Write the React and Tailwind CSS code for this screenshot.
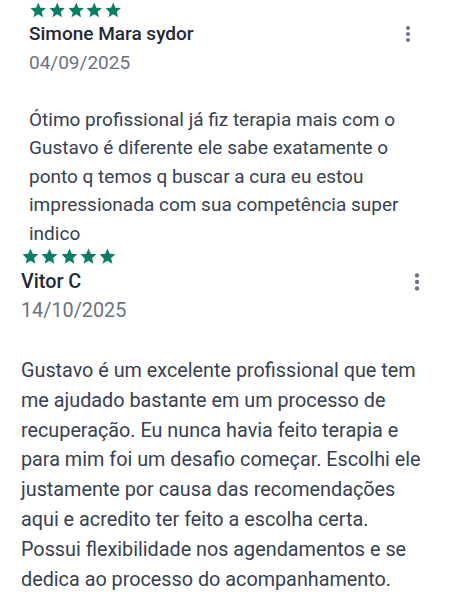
import React from 'react';

const STAR_PATH = 'M12 17.27L18.18 21l-1.64-7.03L22 9.24l-7.19-.61L12 2 9.19 8.63 2 9.24l5.46 5.73L5.82 21z';

const REVIEWS = [
    {
        name: 'Simone Mara sydor',
        date: '04/09/2025',
        text: 'Ótimo profissional já fiz terapia mais com o Gustavo é diferente ele sabe exatamente o ponto q temos q buscar a cura eu estou impressionada com sua competência super indico',
        small: true,
    },
    {
        name: 'Vitor C',
        date: '14/10/2025',
        text: 'Gustavo é um excelente profissional que tem me ajudado bastante em um processo de recuperação. Eu nunca havia feito terapia e para mim foi um desafio começar. Escolhi ele justamente por causa das recomendações aqui e acredito ter feito a escolha certa. Possui flexibilidade nos agendamentos e se dedica ao processo do acompanhamento.',
        small: false,
    },
];

const Stars = ({ small }) => (
    <div className={`flex ${small ? 'h-[14px] gap-[0.3px]' : 'h-[15px] gap-[0.3px]'} items-center`}>
        {[0, 1, 2, 3, 4].map((i) => (
            <svg key={i} viewBox="0 0 24 24" className={small ? 'w-[18.5px] h-[18.5px] shrink-0' : 'w-[19px] h-[19px] shrink-0'} fill="#0a7e63">
                <path d={STAR_PATH} />
            </svg>
        ))}
    </div>
);

const Kebab = ({ small }) => (
    <svg viewBox="0 0 24 24" className={small ? 'w-[24px] h-[24px]' : 'w-[26px] h-[26px]'} fill="#6b7280">
        <circle cx="12" cy="6" r="2" />
        <circle cx="12" cy="12" r="2" />
        <circle cx="12" cy="18" r="2" />
    </svg>
);

const Review = ({ name, date, text, small }) => (
    <div className={small ? 'pl-[29px] pr-[30px] pt-[3px]' : 'pl-[21px] pr-[20px] pt-px'}>
        <Stars small={small} />
        <div className={`flex items-center justify-between ${small ? 'mt-[4px]' : 'mt-[5px]'}`}>
            <p className={`font-medium text-[#1f2937] ${small ? 'text-[19px] leading-[25px]' : 'text-[19.8px] leading-[26px]'}`}>{name}</p>
            <Kebab small={small} />
        </div>
        <p className={`text-[#6b7280] ${small ? 'text-[19px] leading-[25px] mt-[4px]' : 'text-[19.8px] leading-[26px] mt-[3px]'}`}>{date}</p>
        <p className={`text-[#374151] ${small ? 'text-[19px] leading-[28.4px] mt-[31px]' : 'text-[19.8px] leading-[29.8px] mt-[32px]'}`}>
            {text}
        </p>
    </div>
);

export default function App() {
    return (
        <div className="w-[450px] h-[600px] overflow-hidden bg-white font-['Roboto',sans-serif]">
            {REVIEWS.map((r) => (
                <Review key={r.name} {...r} />
            ))}
        </div>
    );
}
